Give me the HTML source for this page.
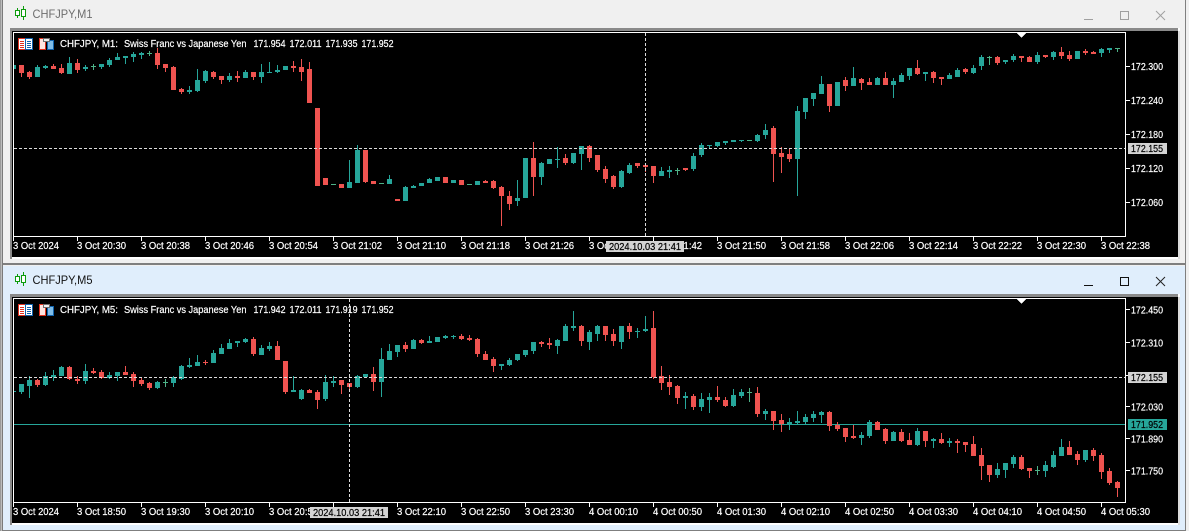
<!DOCTYPE html>
<html lang="en"><head><meta charset="utf-8"><title>CHFJPY</title>
<style>
html,body{margin:0;padding:0;width:1189px;height:531px;overflow:hidden;background:#f0f0f0}
svg{display:block;position:absolute;left:0;top:0}
text{font-family:"Liberation Sans",sans-serif;font-size:10px;fill:#fff;stroke:#fff;stroke-width:.2;white-space:pre}
.t{font-size:12px;stroke:none}
.k{fill:#000;stroke:#000}
.r{stroke:#ef5350;fill:none}.g{stroke:#26a69a;fill:none}.d{stroke:#4db388;fill:none}
.b{stroke-width:5}.w{stroke-width:1}
</style></head><body>
<svg width="1189" height="531" viewBox="0 0 1189 531" xmlns="http://www.w3.org/2000/svg">
<defs>
<clipPath id="c1"><rect x="14" y="33" width="1111" height="203"/></clipPath>
<clipPath id="c2"><rect x="14" y="299" width="1111" height="203"/></clipPath>
<g id="tool" shape-rendering="crispEdges">
<path d="M18.500 38.500h7v11h-7z" fill="#fff" stroke="#e0301e"/>
<path d="M25.500 38.500h7v11h-7z" fill="#fff" stroke="#0f62ac"/>
<path d="M20 41.500h4M20 43.500h4M20 45.500h4M20 47.500h4" stroke="#e0301e"/>
<path d="M27 41.500h4M27 43.500h4M27 45.500h4M27 47.500h4" stroke="#0f62ac"/>
<path d="M39.500 38.500h4l2 2v9h-6z" fill="#fde4e0" stroke="#e0301e"/>
<path d="M47.500 40.500h6v9h-6z" fill="#7fbde8" stroke="#0f62ac"/>
<path d="M43.500 38.500h6v3h-6z" fill="#f0f0f0" stroke="#6f6f6f"/>
</g>
<g id="ic" fill="#fff" stroke="#0c9c0c" stroke-width="1" shape-rendering="crispEdges">
<path d="M17.500 8v2M17.500 16v2" fill="none"/><rect x="15.500" y="10.500" width="4" height="5"/>
<path d="M23.500 6v3M23.500 17v3" fill="none"/><rect x="21.500" y="9.500" width="4" height="7"/>
</g>
</defs>

<!-- window backgrounds -->
<rect x="0" y="0" width="1189" height="531" fill="#f0f0f0"/>
<rect x="3" y="266" width="1183" height="265" fill="#e0eefc"/>
<rect x="0" y="0" width="1" height="531" fill="#9a9a9a"/>
<rect x="1" y="0" width="1" height="531" fill="#bdbdbd"/>
<rect x="2" y="0" width="1" height="531" fill="#7a7a7a"/>
<rect x="1185" y="0" width="1" height="531" fill="#7f7f7f"/>
<rect x="3" y="263" width="1182" height="2" fill="#7f7f7f"/>
<rect x="3" y="530" width="1182" height="1" fill="#7f7f7f"/>

<!-- top frame -->
<rect x="10" y="28" width="1170" height="231" fill="#fff"/>
<rect x="10" y="28" width="1168" height="3" fill="#8a8a8a"/>
<rect x="10" y="28" width="2" height="231" fill="#8a8a8a"/>
<rect x="1178" y="31" width="2" height="228" fill="#dcdcdc"/>
<rect x="12" y="31" width="1166" height="226" fill="#000"/>
<!-- bottom frame -->
<rect x="10" y="294" width="1170" height="231" fill="#fff"/>
<rect x="10" y="294" width="1168" height="3" fill="#8a8a8a"/>
<rect x="10" y="294" width="2" height="231" fill="#8a8a8a"/>
<rect x="1178" y="297" width="2" height="228" fill="#dcdcdc"/>
<rect x="12" y="297" width="1166" height="226" fill="#000"/>

<!-- title bars -->
<use href="#ic"/>
<text class="t" x="32.500" y="18" style="fill:#6d6d6d" textLength="60" lengthAdjust="spacingAndGlyphs">CHFJPY,M1</text>
<path d="M1084 19.500h9" stroke="#a0a0a0" fill="none"/>
<rect x="1120.500" y="11.500" width="8" height="8" fill="none" stroke="#a0a0a0"/>
<path d="M1156 11l9 9M1165 11l-9 9" stroke="#a0a0a0" fill="none"/>

<use href="#ic" y="266"/>
<text class="t" x="32.500" y="284" style="fill:#111" textLength="60" lengthAdjust="spacingAndGlyphs">CHFJPY,M5</text>
<path d="M1084 285.500h9" stroke="#111" fill="none"/>
<rect x="1120.500" y="277.500" width="8" height="8" fill="none" stroke="#111"/>
<path d="M1156 277l9 9M1165 277l-9 9" stroke="#222" fill="none"/>

<!-- ===== TOP CHART ===== -->
<g shape-rendering="crispEdges" fill="none">
<path d="M13.500 32.500H1125.500V236.500H13.500Z" stroke="#fff"/>
<path d="M13.500 236v5M77.500 236v5M141.500 236v5M205.500 236v5M269.500 236v5M333.500 236v5M397.500 236v5M461.500 236v5M525.500 236v5M589.500 236v5M653.500 236v5M717.500 236v5M781.500 236v5M845.500 236v5M909.500 236v5M973.500 236v5M1037.500 236v5M1101.500 236v5" stroke="#fff"/>
<path d="M1125 66.500h5M1125 100.500h5M1125 134.500h5M1125 168.500h5M1125 202.500h5" stroke="#fff"/>
<g clip-path="url(#c1)">
<path class="r w" d="M21.500 65V77M29.500 71V79M53.500 64V69M61.500 64V74M77.500 59V73M157.500 48V69M165.500 64V72M173.500 66V90M181.500 88V94M213.500 71V79M221.500 76V84M237.500 71V82M253.500 72V80M293.500 61V72M301.500 59V81M309.500 62V103M365.500 150V183M485.500 180V183M493.500 180V189M501.500 186V226M509.500 191V210M533.500 142V196M565.500 154V165M589.500 145V162M597.500 155V172M605.500 166V183M613.500 175V189M637.500 163V168M645.500 163V172M653.500 166V183M685.500 168V171M773.500 126V182M781.500 147V173M789.500 148V162M829.500 84V112M845.500 77V91M861.500 78V90M869.500 78V85M885.500 72V85M917.500 60V75M933.500 71V83M941.500 77V85M965.500 68V74M997.500 56V65M1021.500 56V62M1029.500 56V62M1045.500 55V58M1061.500 47V59M1069.500 51V61M1085.500 49V55M1093.500 51V54"/>
<path class="r b" d="M21.500 65V73M29.500 72V77M53.500 66V69M61.500 68V73M77.500 63V70M157.500 53V65M165.500 64V68M173.500 67V90M181.500 89V92M213.500 72V77M221.500 76V80M237.500 76V78M253.500 72V77M293.500 66V68M301.500 67V72M309.500 69V103M317.500 108V186M325.500 178V185M341.500 184V188M365.500 150V182M373.500 181V184M397.500 199V201M445.500 177V183M461.500 180V185M485.500 181V183M493.500 181V188M501.500 187V196M509.500 196V204M533.500 158V177M565.500 158V163M589.500 146V158M597.500 155V170M605.500 169V179M613.500 176V187M637.500 163V166M645.500 165V167M653.500 166V176M685.500 168V170M773.500 128V154M781.500 153V157M789.500 154V159M829.500 84V106M845.500 80V86M861.500 79V83M869.500 82V85M885.500 78V85M917.500 68V74M933.500 72V78M941.500 77V79M965.500 69V72M997.500 57V63M1021.500 56V58M1029.500 57V62M1045.500 55V57M1061.500 52V56M1069.500 55V59M1085.500 51V53M1093.500 52V54"/>
<path class="g w" d="M37.500 65V77M45.500 65V69M69.500 57V74M85.500 65V71M101.500 64V69M109.500 58V67M117.500 53V60M125.500 56V64M133.500 52V62M141.500 52V59M189.500 86V94M197.500 69V92M205.500 70V83M229.500 73V82M245.500 70V78M261.500 64V83M269.500 62V73M277.500 65V73M349.500 160V188M357.500 145V183M389.500 175V184M405.500 186V201M413.500 185V188M429.500 178V183M517.500 180V206M541.500 162V185M557.500 147V168M573.500 153V164M581.500 146V170M621.500 170V188M629.500 163V174M661.500 167V176M669.500 166V178M693.500 153V171M701.500 143V157M709.500 145V149M717.500 142V147M725.500 141V145M741.500 140V142M757.500 134V142M765.500 124V139M797.500 106V196M805.500 98V119M813.500 93V106M821.500 76V94M853.500 67V86M877.500 77V85M893.500 78V98M901.500 73V82M909.500 68V80M925.500 72V81M949.500 73V79M957.500 68V77M973.500 65V74M981.500 55V70M1005.500 60V64M1013.500 54V62M1037.500 52V64M1053.500 51V60M1101.500 48V57M1109.500 48V53"/>
<path class="g b" d="M13.500 65V69M37.500 67V77M45.500 66V68M69.500 63V74M85.500 67V69M101.500 64V67M109.500 60V65M117.500 57V60M125.500 56V58M133.500 54V57M141.500 53V55M189.500 90V92M197.500 80V91M205.500 71V81M229.500 76V80M245.500 72V78M261.500 72V77M269.500 72V73M277.500 70V72M285.500 66V70M349.500 182V188M357.500 150V183M389.500 179V184M405.500 187V201M413.500 186V188M421.500 183V186M429.500 179V183M437.500 177V181M453.500 180V183M477.500 181V185M517.500 198V201M525.500 158V198M541.500 163V177M549.500 159V164M557.500 159V160M573.500 153V163M581.500 146V154M621.500 171V187M629.500 165V173M661.500 171V176M669.500 170V172M693.500 156V169M701.500 145V155M709.500 145V146M717.500 142V146M725.500 141V143M733.500 140V142M741.500 140V141M757.500 135V141M765.500 130V135M797.500 111V159M805.500 98V112M813.500 93V99M821.500 84V94M837.500 82V106M853.500 78V86M877.500 78V85M893.500 81V85M901.500 75V82M909.500 68V76M925.500 72V74M949.500 75V79M957.500 70V77M973.500 68V73M981.500 57V66M1005.500 60V62M1013.500 56V60M1037.500 55V62M1053.500 52V57M1077.500 51V59M1101.500 49V53M1109.500 48V50"/>
<path class="d w" d="M93.500 64V70M149.500 51V56M333.500 184V185M381.500 183V184M469.500 184V185M677.500 168V175M749.500 140V141M989.500 56V65M1117.500 48V52"/>
<path class="d b" d="M93.500 66V67M149.500 53V54M333.500 184V185M381.500 183V184M469.500 184V185M677.500 170V171M749.500 140V141M989.500 57V58M1117.500 48V49"/>
</g>
<path d="M14 148.500H1125" stroke="#dcdcdc" stroke-dasharray="3 2"/>
<path d="M645.500 33V236" stroke="#dcdcdc" stroke-dasharray="3 2"/>
<path d="M1017 33h9l-4.500 5z" fill="#fff"/>
<rect x="1128" y="143" width="39" height="11" fill="#d3d3d3"/>
</g>
<use href="#tool"/>
<text x="60" y="47" textLength="58" lengthAdjust="spacingAndGlyphs">CHFJPY, M1:</text>
<text x="124" y="47" textLength="122.500" lengthAdjust="spacingAndGlyphs">Swiss Franc vs Japanese Yen</text>
<text x="253.500" y="47" textLength="32" lengthAdjust="spacingAndGlyphs">171.954</text>
<text x="289.500" y="47" textLength="32" lengthAdjust="spacingAndGlyphs">172.011</text>
<text x="325.500" y="47" textLength="32" lengthAdjust="spacingAndGlyphs">171.935</text>
<text x="361.500" y="47" textLength="32" lengthAdjust="spacingAndGlyphs">171.952</text>
<g>
<text x="1131" y="70" textLength="32" lengthAdjust="spacingAndGlyphs">172.300</text>
<text x="1131" y="104" textLength="32" lengthAdjust="spacingAndGlyphs">172.240</text>
<text x="1131" y="138" textLength="32" lengthAdjust="spacingAndGlyphs">172.180</text>
<text x="1131" y="172" textLength="32" lengthAdjust="spacingAndGlyphs">172.120</text>
<text x="1131" y="206" textLength="32" lengthAdjust="spacingAndGlyphs">172.060</text>
<text class="k" x="1131" y="152" textLength="32" lengthAdjust="spacingAndGlyphs">172.155</text>
</g>
<g>
<text x="13" y="249" textLength="46" lengthAdjust="spacingAndGlyphs">3 Oct 2024</text>
<text x="77" y="249" textLength="49" lengthAdjust="spacingAndGlyphs">3 Oct 20:30</text>
<text x="141" y="249" textLength="49" lengthAdjust="spacingAndGlyphs">3 Oct 20:38</text>
<text x="205" y="249" textLength="49" lengthAdjust="spacingAndGlyphs">3 Oct 20:46</text>
<text x="269" y="249" textLength="49" lengthAdjust="spacingAndGlyphs">3 Oct 20:54</text>
<text x="333" y="249" textLength="49" lengthAdjust="spacingAndGlyphs">3 Oct 21:02</text>
<text x="397" y="249" textLength="49" lengthAdjust="spacingAndGlyphs">3 Oct 21:10</text>
<text x="461" y="249" textLength="49" lengthAdjust="spacingAndGlyphs">3 Oct 21:18</text>
<text x="525" y="249" textLength="49" lengthAdjust="spacingAndGlyphs">3 Oct 21:26</text>
<text x="589" y="249" textLength="49" lengthAdjust="spacingAndGlyphs">3 Oct 21:34</text>
<text x="653" y="249" textLength="49" lengthAdjust="spacingAndGlyphs">3 Oct 21:42</text>
<text x="717" y="249" textLength="49" lengthAdjust="spacingAndGlyphs">3 Oct 21:50</text>
<text x="781" y="249" textLength="49" lengthAdjust="spacingAndGlyphs">3 Oct 21:58</text>
<text x="845" y="249" textLength="49" lengthAdjust="spacingAndGlyphs">3 Oct 22:06</text>
<text x="909" y="249" textLength="49" lengthAdjust="spacingAndGlyphs">3 Oct 22:14</text>
<text x="973" y="249" textLength="49" lengthAdjust="spacingAndGlyphs">3 Oct 22:22</text>
<text x="1037" y="249" textLength="49" lengthAdjust="spacingAndGlyphs">3 Oct 22:30</text>
<text x="1101" y="249" textLength="49" lengthAdjust="spacingAndGlyphs">3 Oct 22:38</text>
</g>
<rect x="606" y="241" width="78" height="11" fill="#d3d3d3"/>
<text class="k" x="609" y="250" textLength="72" lengthAdjust="spacingAndGlyphs">2024.10.03 21:41</text>

<!-- ===== BOTTOM CHART ===== -->
<g shape-rendering="crispEdges" fill="none">
<path d="M13.500 298.500H1125.500V502.500H13.500Z" stroke="#fff"/>
<path d="M13.500 502v5M77.500 502v5M141.500 502v5M205.500 502v5M269.500 502v5M333.500 502v5M397.500 502v5M461.500 502v5M525.500 502v5M589.500 502v5M653.500 502v5M717.500 502v5M781.500 502v5M845.500 502v5M909.500 502v5M973.500 502v5M1037.500 502v5M1101.500 502v5" stroke="#fff"/>
<path d="M1125 309.500h5M1125 342.500h5M1125 375.500h5M1125 406.500h5M1125 438.500h5M1125 470.500h5" stroke="#fff"/>
<path d="M14 424.500H1125" stroke="#26a69a"/>
<g clip-path="url(#c2)">
<path class="r w" d="M37.500 379V387M69.500 366V380M77.500 376V384M93.500 368V374M101.500 370V379M125.500 366V375M133.500 372V387M141.500 377V386M149.500 382V390M205.500 360V365M253.500 337V356M277.500 341V360M285.500 361V394M309.500 389V393M317.500 390V409M341.500 380V394M349.500 383V390M373.500 367V391M405.500 342V352M421.500 339V344M461.500 334V340M469.500 335V341M477.500 338V357M485.500 351V360M493.500 357V372M541.500 341V347M549.500 338V349M581.500 325V346M605.500 326V341M613.500 329V346M629.500 323V339M653.500 311V379M661.500 366V390M669.500 375V395M677.500 385V404M693.500 394V410M717.500 386V402M725.500 397V407M757.500 387V417M773.500 411V430M781.500 414V432M829.500 411V431M837.500 422V431M845.500 428V442M853.500 425V439M877.500 421V430M885.500 428V444M901.500 429V442M909.500 433V445M925.500 431V447M941.500 433V444M957.500 439V453M965.500 442V452M973.500 436V456M981.500 448V480M989.500 465V482M1021.500 455V470M1029.500 468V478M1069.500 441V455M1077.500 451V465M1093.500 448V461M1101.500 453V479M1109.500 468V485M1117.500 481V497"/>
<path class="r b" d="M37.500 380V385M69.500 367V379M77.500 379V381M93.500 371V373M101.500 372V378M125.500 372V375M133.500 374V381M141.500 380V384M149.500 383V388M205.500 362V363M253.500 339V354M277.500 346V360M285.500 361V392M309.500 390V393M317.500 392V400M341.500 380V385M349.500 383V387M373.500 374V382M405.500 345V349M421.500 340V343M461.500 336V339M469.500 338V340M477.500 339V354M485.500 354V360M493.500 359V366M541.500 342V344M549.500 343V345M581.500 326V341M605.500 326V335M613.500 334V341M629.500 326V332M653.500 328V377M661.500 376V383M669.500 382V387M677.500 386V398M693.500 396V407M717.500 397V400M725.500 400V406M757.500 393V414M773.500 411V421M781.500 420V424M829.500 412V426M837.500 425V429M845.500 428V437M853.500 436V438M877.500 422V430M885.500 429V441M901.500 432V441M909.500 440V445M925.500 431V441M941.500 439V443M957.500 441V443M965.500 442V445M973.500 444V456M981.500 455V466M989.500 465V475M1021.500 457V469M1029.500 468V471M1069.500 447V455M1077.500 454V460M1093.500 450V456M1101.500 455V472M1109.500 471V483M1117.500 482V488"/>
<path class="g w" d="M21.500 384V394M29.500 376V398M45.500 372V386M53.500 370V381M61.500 366V376M85.500 364V384M109.500 372V379M117.500 372V381M157.500 381V389M173.500 376V387M181.500 365V380M189.500 358V368M197.500 355V366M213.500 350V363M221.500 344V354M229.500 339V349M237.500 341V347M245.500 338V343M261.500 345V355M269.500 342V351M293.500 376V392M301.500 389V400M325.500 375V401M333.500 376V387M357.500 375V388M365.500 374V377M381.500 348V397M389.500 344V360M397.500 345V357M413.500 339V349M429.500 336V343M437.500 337V342M445.500 335V339M453.500 335V339M501.500 364V370M509.500 358V366M517.500 354V361M525.500 350V357M533.500 342V354M557.500 339V354M565.500 324V341M573.500 311V331M589.500 330V350M597.500 325V341M621.500 326V349M637.500 328V338M645.500 316V332M685.500 392V409M701.500 393V411M709.500 393V413M733.500 389V407M741.500 389V398M765.500 409V420M789.500 418V430M797.500 411V424M805.500 414V424M813.500 411V422M821.500 411V423M861.500 432V445M869.500 420V438M893.500 431V441M917.500 428V446M933.500 438V448M949.500 438V447M997.500 463V478M1005.500 463V478M1013.500 455V468M1045.500 461V477M1053.500 451V468M1061.500 439V456M1085.500 450V462"/>
<path class="g b" d="M13.500 391V392M21.500 384V392M29.500 380V386M45.500 376V385M53.500 375V377M61.500 367V376M85.500 371V381M109.500 375V378M117.500 372V376M157.500 382V388M173.500 377V383M181.500 366V379M189.500 365V367M197.500 362V366M213.500 353V363M221.500 348V354M229.500 343V349M237.500 341V343M245.500 339V342M261.500 348V355M269.500 346V349M293.500 390V392M301.500 390V399M325.500 382V399M333.500 381V383M357.500 376V387M365.500 374V377M381.500 359V382M389.500 351V360M397.500 345V352M413.500 340V349M429.500 341V343M437.500 337V342M445.500 336V338M453.500 336V337M501.500 364V366M509.500 360V365M517.500 354V360M525.500 350V355M533.500 342V351M557.500 340V346M565.500 326V341M573.500 326V328M589.500 332V342M597.500 326V334M621.500 326V342M637.500 331V332M645.500 329V331M685.500 396V398M701.500 399V407M709.500 397V400M733.500 395V406M741.500 392V396M765.500 411V414M789.500 422V424M797.500 421V423M805.500 417V422M813.500 414V418M821.500 412V415M861.500 435V438M869.500 422V436M893.500 432V441M917.500 431V445M933.500 439V441M949.500 441V443M997.500 469V475M1005.500 463V470M1013.500 457V464M1045.500 465V471M1053.500 455V467M1061.500 447V456M1085.500 450V460"/>
<path class="d w" d="M165.500 379V387M749.500 388V402M1037.500 466V475"/>
<path class="d b" d="M165.500 382V383M749.500 392V393M1037.500 470V471"/>
</g>
<path d="M14 377.500H1125" stroke="#dcdcdc" stroke-dasharray="3 2"/>
<path d="M349.500 299V502" stroke="#dcdcdc" stroke-dasharray="3 2"/>
<path d="M1017 299h9l-4.500 5z" fill="#fff"/>
</g>
<use href="#tool" y="266"/>
<text x="60" y="313" textLength="58" lengthAdjust="spacingAndGlyphs">CHFJPY, M5:</text>
<text x="124" y="313" textLength="122.500" lengthAdjust="spacingAndGlyphs">Swiss Franc vs Japanese Yen</text>
<text x="253.500" y="313" textLength="32" lengthAdjust="spacingAndGlyphs">171.942</text>
<text x="289.500" y="313" textLength="32" lengthAdjust="spacingAndGlyphs">172.011</text>
<text x="325.500" y="313" textLength="32" lengthAdjust="spacingAndGlyphs">171.919</text>
<text x="361.500" y="313" textLength="32" lengthAdjust="spacingAndGlyphs">171.952</text>
<g>
<text x="1131" y="313.500" textLength="32" lengthAdjust="spacingAndGlyphs">172.450</text>
<text x="1131" y="346.500" textLength="32" lengthAdjust="spacingAndGlyphs">172.310</text>
<text x="1131" y="379.500" textLength="32" lengthAdjust="spacingAndGlyphs">172.170</text>
<text x="1131" y="410.500" textLength="32" lengthAdjust="spacingAndGlyphs">172.030</text>
<text x="1131" y="442.500" textLength="32" lengthAdjust="spacingAndGlyphs">171.890</text>
<text x="1131" y="474.500" textLength="32" lengthAdjust="spacingAndGlyphs">171.750</text>
</g>
<rect x="1128" y="372" width="39" height="11" fill="#d3d3d3"/>
<text class="k" x="1131" y="381" textLength="32" lengthAdjust="spacingAndGlyphs">172.155</text>
<rect x="1128" y="419" width="39" height="11" fill="#26a69a"/>
<text class="k" x="1131" y="428" textLength="32" lengthAdjust="spacingAndGlyphs">171.952</text>
<g>
<text x="13" y="515" textLength="46" lengthAdjust="spacingAndGlyphs">3 Oct 2024</text>
<text x="77" y="515" textLength="49" lengthAdjust="spacingAndGlyphs">3 Oct 18:50</text>
<text x="141" y="515" textLength="49" lengthAdjust="spacingAndGlyphs">3 Oct 19:30</text>
<text x="205" y="515" textLength="49" lengthAdjust="spacingAndGlyphs">3 Oct 20:10</text>
<text x="269" y="515" textLength="49" lengthAdjust="spacingAndGlyphs">3 Oct 20:50</text>
<text x="333" y="515" textLength="49" lengthAdjust="spacingAndGlyphs">3 Oct 21:30</text>
<text x="397" y="515" textLength="49" lengthAdjust="spacingAndGlyphs">3 Oct 22:10</text>
<text x="461" y="515" textLength="49" lengthAdjust="spacingAndGlyphs">3 Oct 22:50</text>
<text x="525" y="515" textLength="49" lengthAdjust="spacingAndGlyphs">3 Oct 23:30</text>
<text x="589" y="515" textLength="49" lengthAdjust="spacingAndGlyphs">4 Oct 00:10</text>
<text x="653" y="515" textLength="49" lengthAdjust="spacingAndGlyphs">4 Oct 00:50</text>
<text x="717" y="515" textLength="49" lengthAdjust="spacingAndGlyphs">4 Oct 01:30</text>
<text x="781" y="515" textLength="49" lengthAdjust="spacingAndGlyphs">4 Oct 02:10</text>
<text x="845" y="515" textLength="49" lengthAdjust="spacingAndGlyphs">4 Oct 02:50</text>
<text x="909" y="515" textLength="49" lengthAdjust="spacingAndGlyphs">4 Oct 03:30</text>
<text x="973" y="515" textLength="49" lengthAdjust="spacingAndGlyphs">4 Oct 04:10</text>
<text x="1037" y="515" textLength="49" lengthAdjust="spacingAndGlyphs">4 Oct 04:50</text>
<text x="1101" y="515" textLength="49" lengthAdjust="spacingAndGlyphs">4 Oct 05:30</text>
</g>
<rect x="310" y="507" width="78" height="11" fill="#d3d3d3"/>
<text class="k" x="313" y="516" textLength="72" lengthAdjust="spacingAndGlyphs">2024.10.03 21:41</text>
</svg>
</body></html>
